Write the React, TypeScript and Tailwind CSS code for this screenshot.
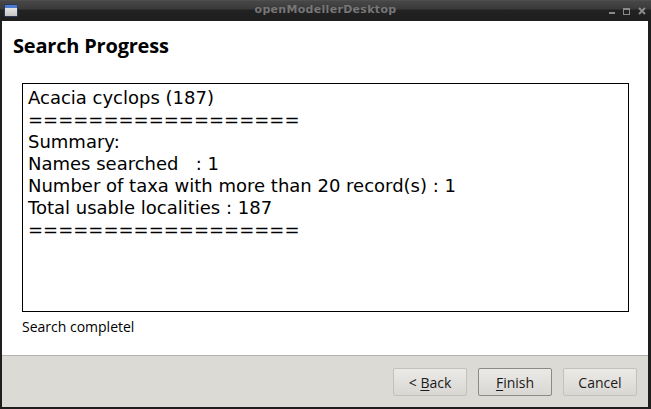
const lines = [
  "Acacia cyclops (187)",
  "==================",
  "Summary:",
  "Names searched   : 1",
  "Number of taxa with more than 20 record(s) : 1",
  "Total usable localities : 187",
  "==================",
];

const TitleBar = () => (
  <div className="relative h-[21px] w-full shrink-0 bg-[linear-gradient(to_bottom,#555_0px,#474747_1px,#3a3a3a_9px,#222_10px,#1e1e1e_21px)]">
    <div className="absolute left-[4px] top-[4px] h-[13px] w-[14px] overflow-hidden rounded-[1px] border border-[#2a3a55] bg-[linear-gradient(to_bottom,#f2f2f2,#c4c4c4)]">
      <div className="h-[3px] w-full bg-[#4a7bd0]" />
    </div>
    <div className="flex h-full items-center justify-center font-['DejaVu_Sans',sans-serif] text-[11px] font-bold tracking-[0.3px] text-[#777] [text-shadow:0_1px_0_#222]">
      openModellerDesktop
    </div>
    <div className="absolute right-[5px] top-[7px] flex items-end gap-[8px]">
      <div className="mb-[1px] h-[2px] w-[6px] bg-[#8a8a8a]" />
      <div className="h-[7px] w-[7px] border border-t-2 border-[#8a8a8a]" />
      <svg width="8" height="8" viewBox="0 0 8 8">
        <path d="M1 1 L7 7 M7 1 L1 7" stroke="#8a8a8a" strokeWidth="2" />
      </svg>
    </div>
  </div>
);

const Button = ({ children, focus }: { children: React.ReactNode; focus?: boolean }) => (
  <button
    className={`flex h-[28px] w-[74px] items-center justify-center rounded-[2px] border bg-[linear-gradient(to_bottom,#ebeae7,#d9d7d3)] font-['Open_Sans',sans-serif] text-[14px] text-[#1a1a1a] ${
      focus ? "border-[#8b8a87]" : "border-[#c3c1bc]"
    }`}
  >
    {children}
  </button>
);

export default function App() {
  return (
    <div className="flex h-[409px] w-[651px] flex-col bg-[#1e1e1e]">
      <TitleBar />
      <div className="ml-[2px] mr-[3px] mb-[2px] flex flex-1 flex-col">
        <div className="flex h-[334px] flex-col bg-white px-[20px] pt-[11px]">
          <h1 className="-ml-[9px] font-['Open_Sans',sans-serif] text-[20px] font-bold leading-[27px] tracking-[-0.2px] text-black">
            Search Progress
          </h1>
          <div className="mt-[24px] h-[229px] w-[607px] border border-black px-[5px] pt-[3px] font-['DejaVu_Sans',sans-serif] text-[18px] leading-[22px] text-black">
            {lines.map((l, i) => (
              <div key={i} className="whitespace-pre">
                {l}
              </div>
            ))}
          </div>
          <div className="mt-[5px] font-['Open_Sans',sans-serif] text-[14px] leading-[19px] text-black">
            Search completel
          </div>
        </div>
        <div className="h-px bg-[#b5b3ae]" />
        <div className="flex flex-1 items-start justify-end gap-[11px] bg-[#dcdad5] pr-[11px] pt-[12px]">
          <Button>
            &lt;&nbsp;<span className="underline underline-offset-2">B</span>ack
          </Button>
          <Button focus>
            <span className="underline underline-offset-2">F</span>inish
          </Button>
          <Button>Cancel</Button>
        </div>
      </div>
    </div>
  );
}
